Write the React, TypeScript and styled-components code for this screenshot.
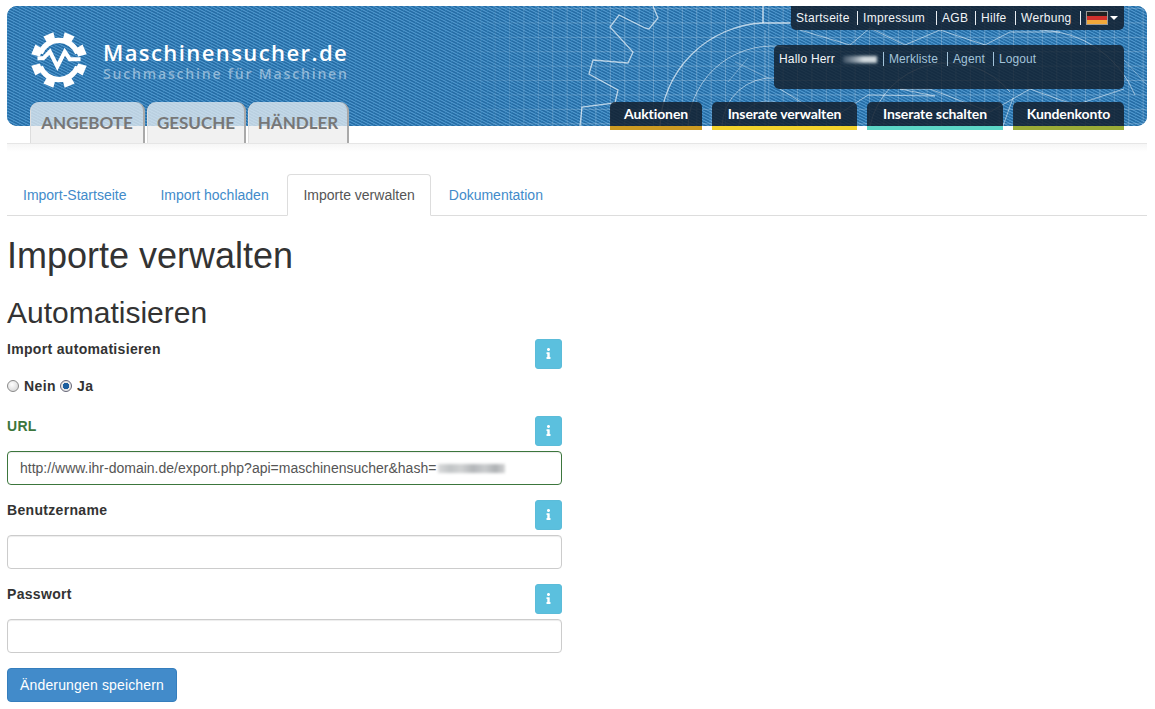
import React from "react";
import styled, { createGlobalStyle } from "styled-components";
import { FaInfo } from "react-icons/fa";

const Global = createGlobalStyle`
  html, body { margin: 0; padding: 0; background: #fff; }
  body { font-family: "Liberation Sans", Arial, sans-serif; font-size: 14px; line-height: 20px; color: #333; }
  * { box-sizing: border-box; }
`;

const Page = styled.div`
  width: 1140px;
  margin-left: 7px;
  padding-top: 6px;
`;

const Header = styled.header`
  position: relative;
  height: 120px;
  border-radius: 10px;
  display: flex;
  justify-content: space-between;
  padding: 0 23px;
  background-color: #3079b0;
`;

const Blueprint = styled.svg`
  position: absolute;
  inset: 0;
  width: 100%;
  height: 100%;
  border-radius: 10px;
`;

const Left = styled.div`
  position: relative;
  display: flex;
  flex-direction: column;
`;

const Brand = styled.div`
  display: flex;
  align-items: center;
  gap: 15px;
  padding: 25px 0 0 0;
`;

const BrandText = styled.div`
  font-family: "Open Sans", sans-serif;
`;

const BrandName = styled.div`
  font-size: 22px;
  line-height: 28px;
  font-weight: 600;
  letter-spacing: 1.42px;
  color: #fff;
`;

const BrandSub = styled.div`
  font-size: 14px;
  line-height: 16px;
  font-weight: 600;
  letter-spacing: 1.83px;
  color: rgba(255, 255, 255, 0.45);
`;

const MainTabs = styled.nav`
  display: flex;
  gap: 2px;
  margin-top: auto;
  margin-bottom: -17px;
`;

const MainTab = styled.a<{ $w: number }>`
  width: ${(p) => p.$w}px;
  height: 41px;
  display: flex;
  align-items: center;
  justify-content: center;
  padding-top: 1px;
  border-radius: 9px 9px 0 0;
  font-family: Lato, sans-serif;
  font-weight: 700;
  font-size: 17px;
  color: #777;
  background: linear-gradient(rgba(232, 238, 242, 0.76) 0 24px, #f1f1f1 24px);
  border-right: 2px solid #a9a9a9;
  border-left: 1px solid #ddd;
`;

const Right = styled.div`
  position: relative;
  width: 350px;
  display: flex;
  flex-direction: column;
  align-items: flex-end;
`;

const TopBar = styled.nav`
  display: flex;
  align-items: center;
  width: 333px;
  height: 24px;
  padding-left: 5px;
  border-radius: 0 0 5px 5px;
  background: rgba(18, 30, 44, 0.84);
`;

const TopLink = styled.a<{ $w: number }>`
  display: block;
  width: ${(p) => p.$w}px;
  font-size: 12px;
  line-height: 14px;
  letter-spacing: 0.3px;
  color: #f1f4f7;
  padding-left: 5px;
  border-left: 1px solid #e8edf2;
  &:first-child { border-left: 0; padding-left: 0; }
`;

const FlagWrap = styled.div`
  display: flex;
  align-items: center;
  gap: 2px;
  border-left: 1px solid #e8edf2;
  padding-left: 5px;
  height: 14px;
`;

const Flag = styled.svg`
  display: block;
  width: 22px;
  height: 14px;
`;

const Caret = styled.span`
  width: 0;
  height: 0;
  border-left: 4px solid transparent;
  border-right: 4px solid transparent;
  border-top: 4px solid #fff;
`;

const UserPanel = styled.div`
  width: 350px;
  height: 44px;
  margin-top: 15px;
  padding: 6px 5px;
  display: flex;
  align-items: flex-start;
  border-radius: 5px;
  background: rgba(18, 30, 44, 0.82);
`;

const Hello = styled.span`
  font-size: 12px;
  line-height: 16px;
  letter-spacing: 0.2px;
  color: #f4f6f8;
  width: 104px;
  position: relative;
`;

const BlurName = styled.i`
  position: absolute;
  left: 64px;
  top: 5px;
  width: 34px;
  height: 7px;
  background: linear-gradient(90deg, #3d5063, #8b9aa6 35%, #d2dade 60%);
  filter: blur(1.5px);
`;

const UserLink = styled.a<{ $w: number }>`
  width: ${(p) => p.$w}px;
  font-size: 12px;
  line-height: 14px;
  letter-spacing: 0.1px;
  margin-top: 1px;
  color: #a3c3d9;
  padding-left: 5px;
  border-left: 1px solid #a3c3d9;
`;

const NavRow = styled.nav`
  display: flex;
  gap: 10px;
  margin-top: auto;
  margin-bottom: -4px;
  white-space: nowrap;
`;

const NavButton = styled.a<{ $c: string; $w: number }>`
  width: ${(p) => p.$w}px;
  height: 28px;
  text-align: center;
  font-family: Lato, sans-serif;
  font-weight: 700;
  font-size: 14px;
  line-height: 24px;
  letter-spacing: -0.1px;
  color: #fff;
  border-radius: 5px 5px 0 0;
  background: rgba(18, 30, 44, 0.84);
  border-bottom: 4px solid ${(p) => p.$c};
`;

const Divider = styled.div`
  height: 9px;
  margin-top: 17px;
  border-top: 1px solid #e6e6e6;
  background: linear-gradient(#f6f6f6, #fff);
`;

const PageTabs = styled.nav`
  display: flex;
  gap: 2px;
  margin-top: 22px;
  height: 42px;
  border-bottom: 1px solid #ddd;
`;

const PageTab = styled.a<{ $active?: boolean; $w?: number }>`
  height: 42px;
  ${(p) => (p.$w ? `width: ${p.$w}px;` : "")}
  padding: 10px 15px;
  border: 1px solid ${(p) => (p.$active ? "#ddd" : "transparent")};
  border-bottom-color: ${(p) => (p.$active ? "#fff" : "transparent")};
  border-radius: 4px 4px 0 0;
  color: ${(p) => (p.$active ? "#555" : "#428bca")};
  background: ${(p) => (p.$active ? "#fff" : "transparent")};
`;

const H1 = styled.h1`
  font-size: 36px;
  font-weight: 500;
  line-height: 39.6px;
  margin: 20px 0 0;
`;

const H2 = styled.h2`
  font-size: 30px;
  font-weight: 500;
  line-height: 33px;
  margin: 20px 0 10px;
`;

const Form = styled.form`
  width: 555px;
`;

const Group = styled.div`
  margin-bottom: 15px;
`;

const LabelRow = styled.div`
  display: flex;
  justify-content: space-between;
  align-items: flex-start;
  height: 30px;
`;

const Label = styled.label<{ $ok?: boolean }>`
  font-weight: 700;
  letter-spacing: 0.32px;
  color: ${(p) => (p.$ok ? "#3c763d" : "#333")};
`;

const InfoButton = styled.button`
  width: 27px;
  height: 30px;
  padding: 0;
  display: flex;
  align-items: center;
  justify-content: center;
  color: #fff;
  font-size: 11px;
  border: 1px solid #5bbcd9;
  border-radius: 3px;
  background: #5bc0de;
`;

const Radios = styled.div`
  display: flex;
  align-items: center;
  height: 32px;
  padding: 7px 0 5px;
  font-weight: 700;
  letter-spacing: 0.4px;
  white-space: nowrap;
`;

const Radio = styled.input`
  appearance: none;
  width: 12px;
  height: 12px;
  margin: 0 5px -1px 0;
  border-radius: 50%;
  border: 1px solid #8a8a8a;
  background: radial-gradient(circle at 40% 35%, #fff, #d0d0d0);
  &:checked {
    background: radial-gradient(circle, #1d5f9f 0 3px, #e8e8e8 3.4px);
    border-color: #667;
  }
`;

const RadioText = styled.span`
  margin-right: 4px;
`;

const InputWrap = styled.div`
  position: relative;
  margin-top: 5px;
`;

const Input = styled.input<{ $ok?: boolean }>`
  display: block;
  width: 100%;
  height: 34px;
  padding: 6px 12px;
  font: 14px/20px "Liberation Sans", Arial, sans-serif;
  color: #555;
  background: #fff;
  border: 1px solid ${(p) => (p.$ok ? "#3c763d" : "#ccc")};
  border-radius: 4px;
  box-shadow: inset 0 1px 1px rgba(0, 0, 0, 0.075);
`;

const BlurHash = styled.i`
  position: absolute;
  left: 431px;
  top: 13px;
  width: 67px;
  height: 9px;
  background: linear-gradient(90deg, #d9dadb, #c1c4c6 18%, #d0d2d3 34%, #b3b6b9 52%, #c9cbcd 70%, #aeb1b4 86%, #d2d3d4);
  filter: blur(1.5px);
`;

const Submit = styled.button`
  display: block;
  width: 170px;
  height: 34px;
  padding: 6px 12px;
  font: 14px/20px "Liberation Sans", Arial, sans-serif;
  letter-spacing: 0.15px;
  color: #fff;
  background: #428bca;
  border: 1px solid #357ebd;
  border-radius: 4px;
`;

const Logo = () => (
  <svg width="58" height="58" viewBox="0 0 70 70" aria-hidden="true">
    {[22.5, 67.5, 112.5, 157.5, 202.5, 247.5, 292.5, 337.5].map((a) => (
      <polygon key={a} points="30,12 40,12 41.5,1.5 28.5,1.5" transform={`rotate(${a} 35 35)`} fill="#fff" />
    ))}
    <path d="M12.5 27 A24 24 0 0 1 57.5 27" fill="none" stroke="#fff" strokeWidth="6.4" />
    <path d="M12.5 43 A24 24 0 0 0 57.5 43" fill="none" stroke="#fff" strokeWidth="6.4" />
    <polyline
      points="9,33 16,33 24,25 33,43 42,25 48,34 61,34"
      fill="none"
      stroke="#fff"
      strokeWidth="4.8"
      strokeLinejoin="miter"
    />
  </svg>
);

const twillRows = [0, 1, 2, 3, 4, 5];

const BlueprintArt = () => (
  <Blueprint viewBox="7 6 1140 120" preserveAspectRatio="none" aria-hidden="true">
    <defs>
      <pattern id="twill" x="7" y="6" width="6" height="6" patternUnits="userSpaceOnUse">
        <rect width="6" height="6" fill="#2f7bb3" />
        {twillRows.map((r) => (
          <React.Fragment key={r}>
            <rect x={(r * 2) % 6} y={r} width="2" height="1" fill="#4c92c9" shapeRendering="crispEdges" />
            <rect x={(r * 2 + 3) % 6} y={r} width="2" height="1" fill="#266ba4" shapeRendering="crispEdges" />
          </React.Fragment>
        ))}
      </pattern>
      <pattern id="grid" x="6" y="9" width="14.4" height="14.4" patternUnits="userSpaceOnUse">
        <path d="M14.4 0V14.4H0" fill="none" stroke="#fff" strokeOpacity="0.42" strokeWidth="1" />
      </pattern>
      <linearGradient id="fade" x1="0" x2="1" y1="0" y2="0">
        <stop offset="0" stopColor="#fff" stopOpacity="0" />
        <stop offset="1" stopColor="#fff" stopOpacity="1" />
      </linearGradient>
      <mask id="fadeMask" maskUnits="userSpaceOnUse" x="7" y="6" width="1140" height="120">
        <rect x="440" y="6" width="150" height="120" fill="url(#fade)" />
        <rect x="590" y="6" width="560" height="120" fill="#fff" />
      </mask>
    </defs>
    <rect x="7" y="6" width="1140" height="120" fill="url(#twill)" />
    <g mask="url(#fadeMask)">
      <rect x="7" y="6" width="1140" height="120" fill="url(#grid)" />
    </g>
    <g fill="none" stroke="#fff" strokeOpacity="0.65" strokeWidth="1.3">
      <polyline points="653,6 658,18 649,29 645,28 619,15 610,27 633,52 628,63 593,60 589,74 618,90 615,103 582,107 580,126" />
      <path d="M660 126 A108 108 0 0 1 763 23 L790 23" />
      <path d="M763 6 V23" strokeOpacity="0.8" />
    </g>
    <g fill="none" stroke="#fff" strokeOpacity="0.5" strokeWidth="1">
      <path d="M688 126 A84 84 0 0 1 790 48" />
      <path d="M722 126 A50 50 0 0 1 776 78" />
      <path d="M735 62 L768 78 M728 82 L748 58 M765 30 V126" strokeOpacity="0.3" />
      <circle cx="768" cy="131" r="30" strokeOpacity="0.3" />
      <polyline points="800,30 850,45 870,28 905,45 940,30 985,45 1010,32 1060,32" />
      <polyline points="780,89 830,120 868,95 935,96 900,89 930,89 990,112 1030,89 1075,105 1124,89" />
      <path d="M1040 30 A105 105 0 0 1 1135 95" />
      <path d="M1124 60 L1147 85" strokeOpacity="0.3" />
      <path d="M870 126 A80 80 0 0 1 1010 92" />
      <path d="M1003 126 L1013 98" />
    </g>
  </Blueprint>
);

const Field = ({ label, ok, value, hash }: { label: string; ok?: boolean; value?: string; hash?: boolean }) => (
  <Group>
    <LabelRow>
      <Label $ok={ok}>{label}</Label>
      <InfoButton type="button" aria-label="Info"><FaInfo /></InfoButton>
    </LabelRow>
    <InputWrap>
      <Input $ok={ok} defaultValue={value} />
      {hash && <BlurHash />}
    </InputWrap>
  </Group>
);

export default function App() {
  return (
    <Page>
      <Global />
      <Header>
        <BlueprintArt />
        <Left>
          <Brand>
            <Logo />
            <BrandText>
              <BrandName>Maschinensucher.de</BrandName>
              <BrandSub>Suchmaschine für Maschinen</BrandSub>
            </BrandText>
          </Brand>
          <MainTabs>
            <MainTab $w={115}>ANGEBOTE</MainTab>
            <MainTab $w={99}>GESUCHE</MainTab>
            <MainTab $w={101}>HÄNDLER</MainTab>
          </MainTabs>
        </Left>
        <Right>
          <TopBar>
            <TopLink $w={61}>Startseite</TopLink>
            <TopLink $w={79}>Impressum</TopLink>
            <TopLink $w={39}>AGB</TopLink>
            <TopLink $w={40}>Hilfe</TopLink>
            <TopLink $w={65}>Werbung</TopLink>
            <FlagWrap>
              <Flag viewBox="0 0 22 14" aria-label="Deutsch">
                <rect width="22" height="14" fill="#999" />
                <rect x="1" y="1" width="20" height="4" fill="#222" />
                <rect x="1" y="5" width="20" height="4" fill="#d0312d" />
                <rect x="1" y="9" width="20" height="4" fill="#f2a93b" />
              </Flag>
              <Caret />
            </FlagWrap>
          </TopBar>
          <UserPanel>
            <Hello>Hallo Herr<BlurName /></Hello>
            <UserLink $w={64}>Merkliste</UserLink>
            <UserLink $w={46}>Agent</UserLink>
            <UserLink $w={50}>Logout</UserLink>
          </UserPanel>
          <NavRow>
            <NavButton $c="#cc9a22" $w={92}>Auktionen</NavButton>
            <NavButton $c="#f2d22c" $w={145}>Inserate verwalten</NavButton>
            <NavButton $c="#5cd6c6" $w={136}>Inserate schalten</NavButton>
            <NavButton $c="#9aab37" $w={111}>Kundenkonto</NavButton>
          </NavRow>
        </Right>
      </Header>
      <Divider />
      <PageTabs>
        <PageTab>Import-Startseite</PageTab>
        <PageTab $w={141}>Import hochladen</PageTab>
        <PageTab $active>Importe verwalten</PageTab>
        <PageTab>Dokumentation</PageTab>
      </PageTabs>
      <H1>Importe verwalten</H1>
      <H2>Automatisieren</H2>
      <Form>
        <Group>
          <LabelRow>
            <Label>Import automatisieren</Label>
            <InfoButton type="button" aria-label="Info"><FaInfo /></InfoButton>
          </LabelRow>
          <Radios>
            <Radio type="radio" name="auto" />
            <RadioText>Nein</RadioText>
            <Radio type="radio" name="auto" defaultChecked />
            <RadioText>Ja</RadioText>
          </Radios>
        </Group>
        <Field label="URL" ok value="http://www.ihr-domain.de/export.php?api=maschinensucher&hash=" hash />
        <Field label="Benutzername" />
        <Field label="Passwort" />
        <Submit type="button">Änderungen speichern</Submit>
      </Form>
    </Page>
  );
}
